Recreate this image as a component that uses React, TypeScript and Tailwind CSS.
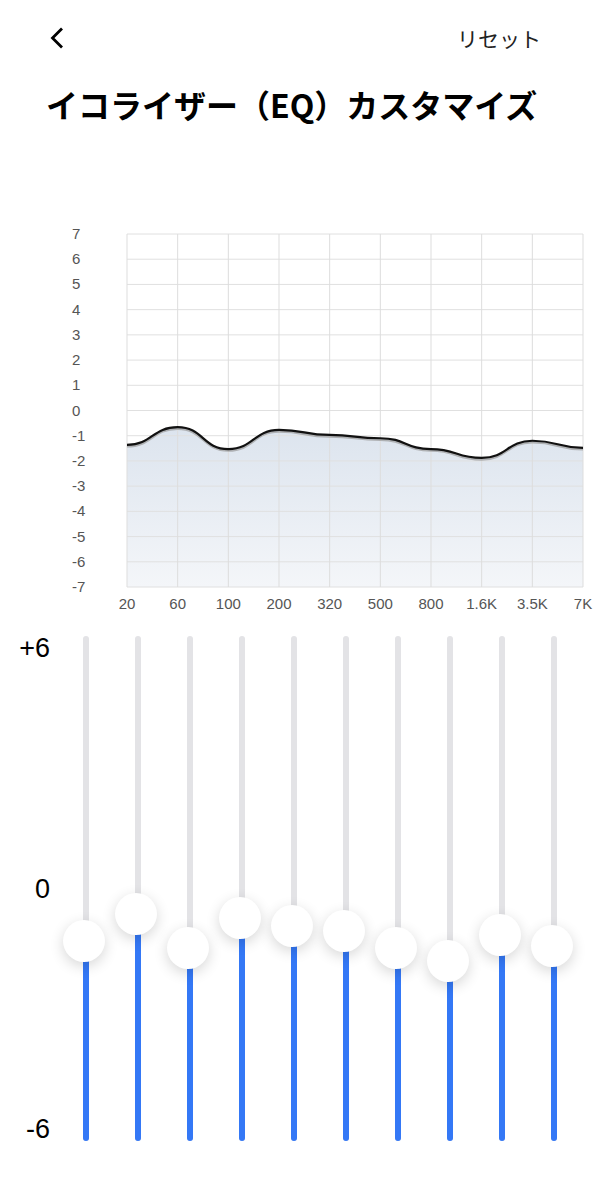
import React from "react";

const bands = ["20", "60", "100", "200", "320", "500", "800", "1.6K", "3.5K", "7K"];
const gains = [-1.36, -0.66, -1.53, -0.77, -0.97, -1.1, -1.53, -1.88, -1.2, -1.48];

// plot area in page coordinates (svg viewBox starts at y=220)
const LEFT = 127;
const RIGHT = 583;
const TOP = 234;
const BOTTOM = 587;
const STEP_X = (RIGHT - LEFT) / 9;
const STEP_Y = (BOTTOM - TOP) / 14;

const px = (i: number) => LEFT + i * STEP_X;
const py = (v: number) => TOP + (7 - v) * STEP_Y;

function curvePath(offset = 0) {
  let d = `M ${px(0)} ${py(gains[0]) + offset}`;
  for (let i = 1; i < gains.length; i++) {
    const x0 = px(i - 1);
    const x1 = px(i);
    const mx = (x0 + x1) / 2;
    d += ` C ${mx} ${py(gains[i - 1]) + offset}, ${mx} ${py(gains[i]) + offset}, ${x1} ${py(gains[i]) + offset}`;
  }
  return d;
}

function EqChart() {
  const line = curvePath();
  const area = `${line} L ${RIGHT} ${BOTTOM} L ${LEFT} ${BOTTOM} Z`;
  const yTicks = Array.from({ length: 15 }, (_, i) => 7 - i);

  return (
    <svg width={604} height={400} viewBox="0 220 604 400" className="block">
      <defs>
        <linearGradient id="eqFill" x1="0" y1="0" x2="0" y2="1">
          <stop offset="0%" stopColor="#dce4ee" />
          <stop offset="100%" stopColor="#f4f6f9" />
        </linearGradient>
      </defs>

      <path d={area} fill="url(#eqFill)" />

      {/* grid */}
      {yTicks.map((v) => (
        <line key={v} x1={LEFT} x2={RIGHT} y1={py(v)} y2={py(v)} stroke="#e0e0e0" strokeWidth={1} />
      ))}
      {bands.map((b, i) => (
        <line key={b} x1={px(i)} x2={px(i)} y1={TOP} y2={BOTTOM} stroke="#dddddd" strokeWidth={1} />
      ))}

      <path d={curvePath(1.5)} fill="none" stroke="#9a9a9a" strokeWidth={2.5} opacity={0.7} />
      <path d={line} fill="none" stroke="#111" strokeWidth={2.2} />

      {/* axis labels */}
      {yTicks.map((v) => (
        <text
          key={v}
          x={72}
          y={py(v) + 5}
          fontSize={15}
          fill="#555"
          fontFamily="'Liberation Sans', Arial, sans-serif"
        >
          {v}
        </text>
      ))}
      {bands.map((b, i) => (
        <text
          key={b}
          x={px(i)}
          y={609}
          fontSize={15}
          fill="#555"
          textAnchor="middle"
          fontFamily="'Liberation Sans', Arial, sans-serif"
        >
          {b}
        </text>
      ))}
    </svg>
  );
}

const TRACK_H = 505;
const CENTER = 252.5;
const PER_DB = 38.6;

function Slider({ gain }: { gain: number }) {
  const thumbY = CENTER - gain * PER_DB;
  return (
    <div className="w-[52px] flex justify-center">
      <div className="relative w-[6px] h-[505px] rounded-full bg-[#e3e3e6]">
        <div
          className="absolute left-0 bottom-0 w-[6px] rounded-b-full bg-[#3478f6]"
          style={{ height: TRACK_H - thumbY }}
        />
        <div
          className="absolute left-[-20px] w-[42px] h-[42px] rounded-full bg-white shadow-[0_4px_14px_rgba(0,0,0,0.16)]"
          style={{ top: thumbY - 21 }}
        />
      </div>
    </div>
  );
}

export default function App() {
  return (
    <div className="w-[604px] h-[1200px] bg-white overflow-hidden font-['Noto_Sans_CJK_JP',sans-serif] text-black">
      {/* header */}
      <div className="h-[76px] pl-[50px] pr-[63px] flex items-center justify-between">
        <svg width={14} height={22} viewBox="0 0 14 22">
          <polyline points="12,1.5 2.5,11 12,20.5" fill="none" stroke="#000" strokeWidth={2.8} />
        </svg>
        <span className="text-[21px] text-[#222] leading-none">リセット</span>
      </div>

      <h1 className="mt-[12px] ml-[46px] text-[32px] font-bold leading-none h-[32px] whitespace-nowrap">
        イコライザー（EQ）カスタマイズ
      </h1>

      <div className="mt-[100px]">
        <EqChart />
      </div>

      {/* sliders */}
      <div className="mt-[16px] flex">
        <div className="w-[50px] h-[505px] flex flex-col justify-between items-end font-['Liberation_Sans',Arial,sans-serif] text-[27px] leading-[24px]">
          <span>+6</span>
          <span>0</span>
          <span>-6</span>
        </div>
        <div className="ml-[10px] flex">
          {gains.map((g, i) => (
            <Slider key={i} gain={g} />
          ))}
        </div>
      </div>
    </div>
  );
}
